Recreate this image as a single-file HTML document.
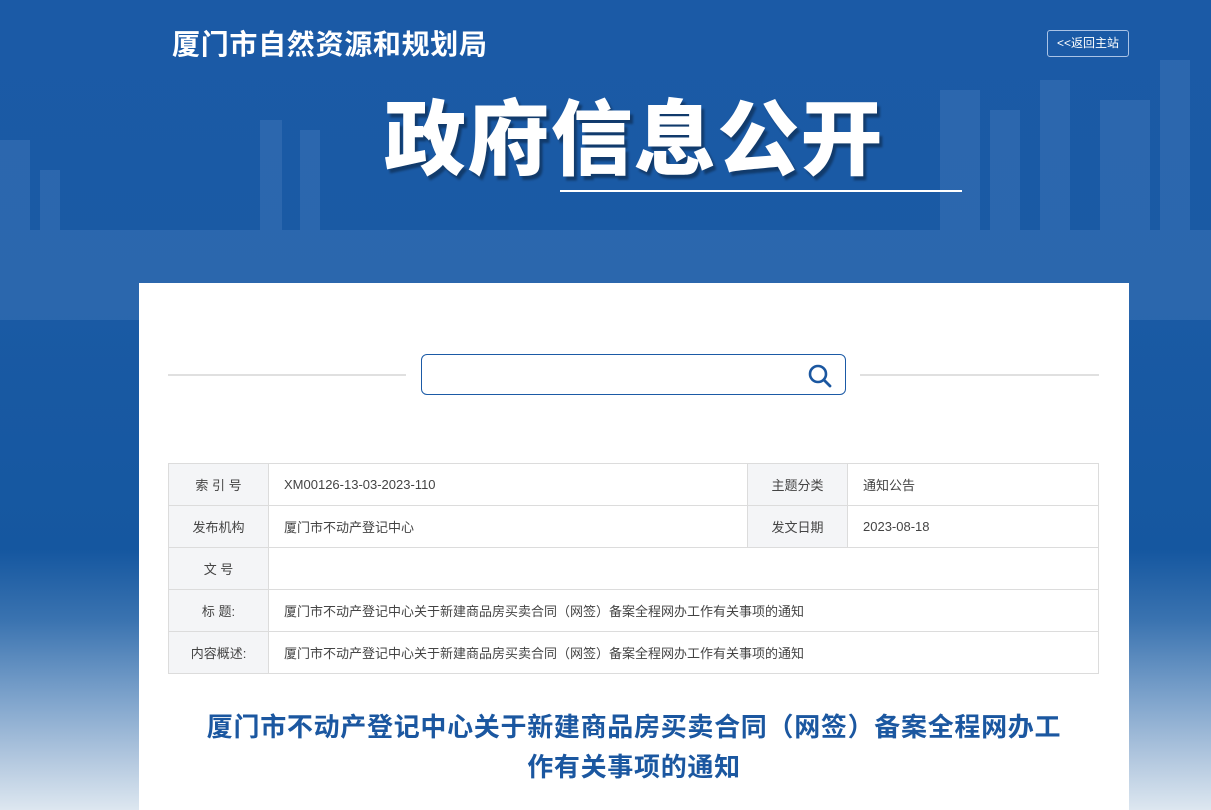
<!DOCTYPE html>
<html><head><meta charset="utf-8"><style>
*{margin:0;padding:0;box-sizing:border-box}
body{width:1211px;height:810px;overflow:hidden;position:relative;font-family:"Liberation Sans","Noto Sans CJK SC",sans-serif;
background:linear-gradient(to bottom,#1b5aa6 0px,#1a5aa4 300px,#1557a0 550px,#3a73b0 620px,#7fa4cc 700px,#b3c8df 760px,#dde7f0 810px);}
.city{position:absolute;left:0;top:60px;width:1211px;height:260px;opacity:.13}
.t1{position:absolute;left:172px;top:23px;color:#fff;font-size:28px;font-weight:bold;letter-spacing:0.7px;font-family:"Noto Sans CJK SC",sans-serif}
.back{position:absolute;left:1047px;top:30px;width:82px;height:27px;border:1px solid #aac3e6;border-radius:3px;color:#fff;font-size:12px;line-height:25px;text-align:center}
.big{position:absolute;left:384px;top:84px;color:#fff;font-size:82px;font-weight:900;font-family:"Noto Sans CJK SC",sans-serif;letter-spacing:1.3px;text-shadow:3px 4px 2px rgba(0,0,0,.35);line-height:1.2}
.uline{position:absolute;left:560px;top:190px;width:402px;height:2px;background:#fff}
.card{position:absolute;left:139px;top:283px;width:990px;height:527px;background:#fff}
.hl{position:absolute;top:374px;height:2px;background:#e0e0e0}
.search{position:absolute;left:421px;top:354px;width:425px;height:41px;border:1px solid #1b5aa6;border-radius:6px}
table{position:absolute;left:168px;top:463px;width:931px;border-collapse:collapse;font-size:13px;color:#444}
td{border:1px solid #dcdcdc;height:42px;padding:0 15px}
td.l{background:#f4f5f7;text-align:center;width:100px;padding:0}
h1{position:absolute;left:139px;width:990px;top:706px;text-align:center;color:#1b57a0;font-size:26px;letter-spacing:0.7px;line-height:40px;font-weight:bold;font-family:"Noto Sans CJK SC",sans-serif}
</style></head><body>
<svg class="city" viewBox="0 0 1211 260">
<g fill="#9ec0ea">
<rect x="0" y="80" width="30" height="180"/><rect x="40" y="110" width="20" height="150"/><rect x="260" y="60" width="22" height="200"/><rect x="300" y="70" width="20" height="190"/>
<rect x="940" y="30" width="40" height="230"/><rect x="990" y="50" width="30" height="210"/><rect x="1040" y="20" width="30" height="240"/><rect x="1100" y="40" width="50" height="220"/><rect x="1160" y="0" width="30" height="260"/>
<rect x="0" y="170" width="1211" height="90"/>
</g></svg>
<div class="t1">厦门市自然资源和规划局</div>
<div class="back">&lt;&lt;返回主站</div>
<div class="big">政府信息公开</div>
<div class="uline"></div>
<div class="card"></div>
<div class="hl" style="left:168px;width:238px"></div>
<div class="hl" style="left:860px;width:239px"></div>
<div class="search"><svg style="position:absolute;right:12px;top:8px" width="26" height="26" viewBox="0 0 26 26"><circle cx="11" cy="11" r="8" fill="none" stroke="#1b57a0" stroke-width="2.6"/><path d="M17 17 L23 23" stroke="#1b57a0" stroke-width="2.8" stroke-linecap="round"/></svg></div>
<table>
<tr><td class="l">索 引 号</td><td>XM00126-13-03-2023-110</td><td class="l">主题分类</td><td style="width:251px">通知公告</td></tr>
<tr><td class="l">发布机构</td><td>厦门市不动产登记中心</td><td class="l">发文日期</td><td>2023-08-18</td></tr>
<tr><td class="l">文 号</td><td colspan="3"></td></tr>
<tr><td class="l">标 题:</td><td colspan="3">厦门市不动产登记中心关于新建商品房买卖合同（网签）备案全程网办工作有关事项的通知</td></tr>
<tr><td class="l">内容概述:</td><td colspan="3">厦门市不动产登记中心关于新建商品房买卖合同（网签）备案全程网办工作有关事项的通知</td></tr>
</table>
<h1>厦门市不动产登记中心关于新建商品房买卖合同（网签）备案全程网办工<br>作有关事项的通知</h1>
</body></html>
